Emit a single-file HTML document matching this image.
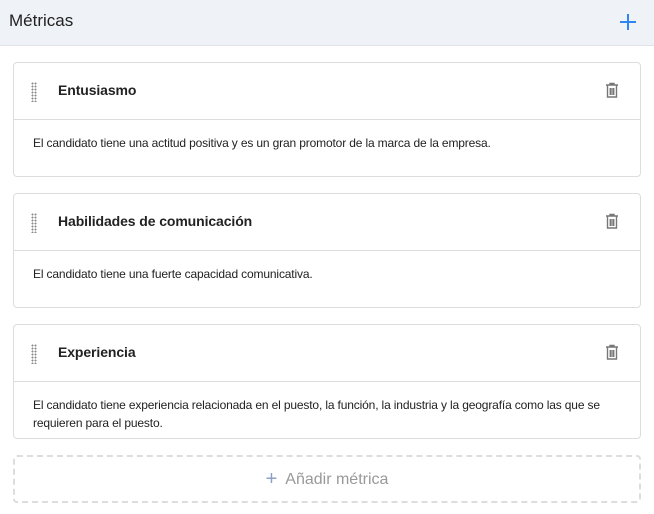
<!DOCTYPE html>
<html><head><meta charset="utf-8"><style>
*{box-sizing:border-box;margin:0;padding:0}
body{width:654px;height:514px;background:#fff;font-family:"Liberation Sans",sans-serif;color:#222;overflow:hidden;position:relative}
.hd{position:absolute;left:0;top:0;width:654px;height:46px;background:#eff2f6;border-bottom:1px solid #dfe2e6}
.hd h1{position:absolute;left:9px;top:11px;font-size:17px;font-weight:normal;color:#222}
.plus{position:absolute;left:620px;top:14px;width:16px;height:16px}
.card{position:absolute;left:13px;width:628px;height:115px;border:1px solid #ddd;border-radius:4px;overflow:hidden;background:#fff}
.ch{height:57px;border-bottom:1px solid #ddd;position:relative}
.ch .t{position:absolute;left:44px;top:19px;font-size:14px;font-weight:bold;color:#222;letter-spacing:-0.1px}
.drag{position:absolute;left:17px;top:19px;width:6px;height:20px;background-image:radial-gradient(circle,#888 0.9px,transparent 1.1px);background-size:3px 3px}
.trash{position:absolute;left:590px;top:19px}
.cb{padding:14px 20px 0 19px;font-size:12px;line-height:18px;color:#222;letter-spacing:-0.15px}
.add{position:absolute;left:13px;top:455px;width:628px;height:48px;border:2px dashed #ddd;border-radius:4px;text-align:center;line-height:44px;font-size:16px;color:#999}
.add span{color:#8aa0c8;font-size:20px;margin-right:8px;vertical-align:-1px}
</style></head><body>
<div class="hd"><h1>Métricas</h1>
<svg class="plus" viewBox="0 0 16 16"><path d="M8 0v16M0 8h16" stroke="#2f86f0" stroke-width="2"/></svg></div>

<div class="card" style="top:62px"><div class="ch"><div class="drag"></div><div class="t">Entusiasmo</div>
<svg class="trash" width="16" height="17" viewBox="0 0 16 17"><path d="M2 3h12M6 3V1.5h4V3M3.5 3.5v11.5h9V3.5M6.3 6v7M8 6v7M9.7 6v7" stroke="#777" stroke-width="1.4" fill="none"/></svg></div>
<div class="cb">El candidato tiene una actitud positiva y es un gran promotor de la marca de la empresa.</div></div>

<div class="card" style="top:193px"><div class="ch"><div class="drag"></div><div class="t">Habilidades de comunicación</div>
<svg class="trash" width="16" height="17" viewBox="0 0 16 17"><path d="M2 3h12M6 3V1.5h4V3M3.5 3.5v11.5h9V3.5M6.3 6v7M8 6v7M9.7 6v7" stroke="#777" stroke-width="1.4" fill="none"/></svg></div>
<div class="cb">El candidato tiene una fuerte capacidad comunicativa.</div></div>

<div class="card" style="top:324px"><div class="ch"><div class="drag"></div><div class="t">Experiencia</div>
<svg class="trash" width="16" height="17" viewBox="0 0 16 17"><path d="M2 3h12M6 3V1.5h4V3M3.5 3.5v11.5h9V3.5M6.3 6v7M8 6v7M9.7 6v7" stroke="#777" stroke-width="1.4" fill="none"/></svg></div>
<div class="cb">El candidato tiene experiencia relacionada en el puesto, la función, la industria y la geografía como las que se requieren para el puesto.</div></div>

<div class="add"><span>+</span>Añadir métrica</div>
</body></html>
